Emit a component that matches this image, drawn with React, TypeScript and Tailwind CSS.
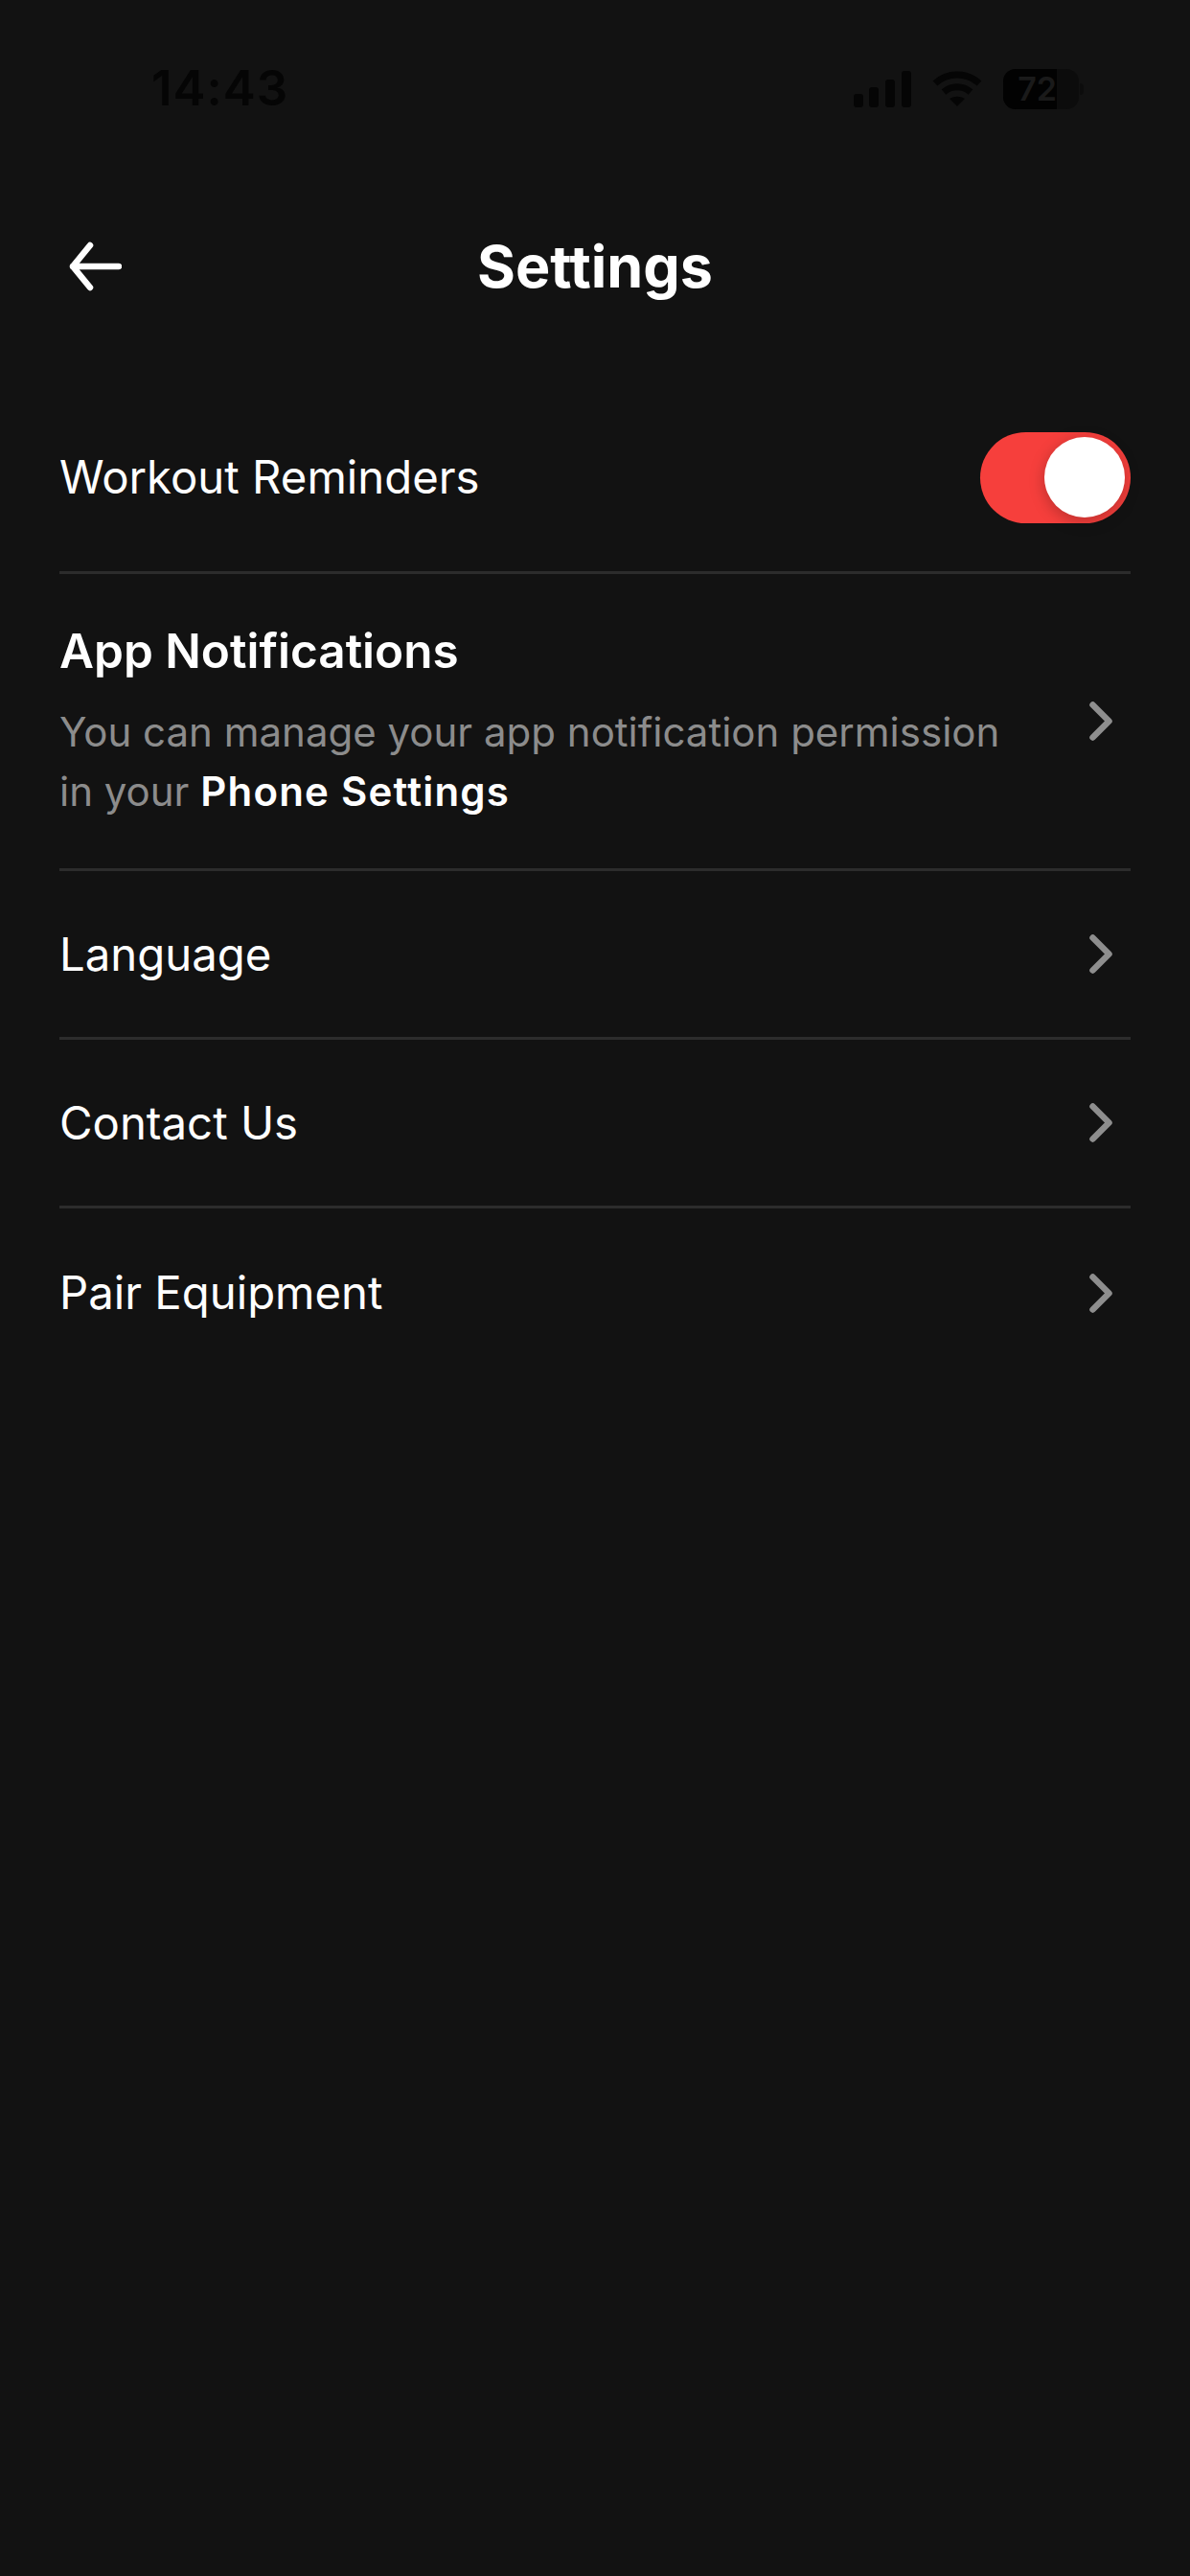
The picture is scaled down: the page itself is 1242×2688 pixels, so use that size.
import React from "react";

function Chevron() {
  return (
    <svg width="24" height="41" viewBox="0 0 24 41" fill="none" className="shrink-0">
      <path d="M3.5 3.5 L20.5 20.5 L3.5 37.5" stroke="#8e8e8e" strokeWidth="6.5" strokeLinecap="round" strokeLinejoin="round" />
    </svg>
  );
}

function NavRow({ label }: { label: string }) {
  return (
    <div className="flex h-[176px] items-center justify-between border-b-[3px] border-[#2c2c2c] pr-[19px] last:border-b-0">
      <span className="text-[47.3px] leading-[60px] text-white">{label}</span>
      <Chevron />
    </div>
  );
}

export default function App() {
  return (
    <div className="flex h-[2688px] w-[1242px] flex-col bg-[#121212] font-['Inter','Liberation_Sans',sans-serif] overflow-hidden">
      {/* status bar */}
      <div className="flex h-[122px] items-end justify-between pl-[158px] pr-[111px]">
        <span className="text-[51px] leading-[60px] font-semibold tracking-[1px] text-[#050505]">14:43</span>
        <div className="flex items-center gap-[22px] pb-[8px]">
          <svg width="60" height="38" viewBox="0 0 60 38" fill="#050505">
            <rect x="0" y="24" width="10" height="14" rx="3" />
            <rect x="16" y="17" width="10" height="21" rx="3" />
            <rect x="33" y="9" width="10" height="29" rx="3" />
            <rect x="50" y="0" width="10" height="38" rx="3" />
          </svg>
          <svg width="52" height="38" viewBox="0 0 52 38" fill="none" stroke="#050505" strokeWidth="7">
            <path d="M3 13 C16 1 36 1 49 13" />
            <path d="M12 22 C20 15 32 15 40 22" />
            <path d="M26 37 L18 29 C23 26 29 26 34 29 Z" fill="#050505" stroke="none" />
          </svg>
          <div className="flex items-center gap-[1px]">
            <div className="flex h-[42px] w-[79px] items-center overflow-hidden rounded-[13px] bg-[#0c0c0c]">
              <div className="flex h-full w-[56px] items-center justify-end bg-[#020202]">
                <span className="text-[34px] leading-none font-semibold text-[#1a1a1a]">72</span>
              </div>
            </div>
            <div className="h-[12px] w-[4px] rounded-r-full bg-[#0c0c0c]" />
          </div>
        </div>
      </div>

      {/* header */}
      <div className="relative mt-[126px] flex h-[60px] items-center justify-center">
        <svg width="56" height="54" viewBox="0 0 56 54" fill="none" className="absolute left-[71px] top-[3px]">
          <path d="M53 27 H5 M23 5 L5 27 L23 49" stroke="#ffffff" strokeWidth="6.5" strokeLinecap="round" strokeLinejoin="round" />
        </svg>
        <h1 className="text-[61px] leading-[60px] font-bold text-white">Settings</h1>
      </div>

      {/* list */}
      <div className="mt-[118px] flex flex-col px-[62px]">
        <div className="flex h-[173px] items-center justify-between border-b-[3px] border-[#2c2c2c] pb-[26px]">
          <span className="text-[47.3px] leading-[60px] text-white">Workout Reminders</span>
          <div className="flex h-[95px] w-[157px] items-center justify-end rounded-full bg-[#f63f3c] pr-[6px]">
            <div className="h-[84px] w-[84px] rounded-full bg-white shadow-[0_4px_16px_rgba(0,0,0,0.25)]" />
          </div>
        </div>

        <div className="flex h-[310px] items-center justify-between border-b-[3px] border-[#2c2c2c] pr-[19px]">
          <div className="flex flex-col">
            <span className="text-[49.5px] leading-[60px] font-semibold text-white">App Notifications</span>
            <p className="mt-[24px] text-[42px] leading-[62px] text-[#8c8c8c]">
              You can manage your app notification permission
              <br />
              in your <span className="font-semibold tracking-[1.2px] text-white">Phone Settings</span>
            </p>
          </div>
          <Chevron />
        </div>

        <NavRow label="Language" />
        <NavRow label="Contact Us" />
        <NavRow label="Pair Equipment" />
      </div>
    </div>
  );
}
